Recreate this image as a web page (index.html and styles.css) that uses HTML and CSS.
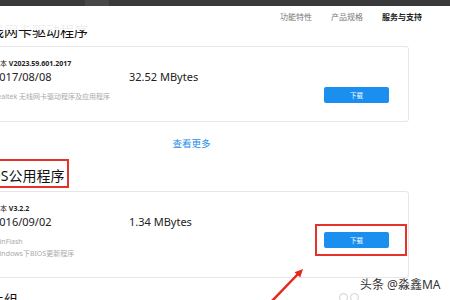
FILE: index.html
```html
<!DOCTYPE html>
<html lang="zh-CN">
<head>
  <meta charset="UTF-8">
  <meta name="viewport" content="width=device-width, initial-scale=1.0">
  <title>服务与支持</title>
  <link rel="stylesheet" href="styles.css">
</head>
<body>
  <div class="topbar"><span class="tab"></span></div>
  <header class="header">
    <nav class="nav">
      <a href="#">功能特性</a>
      <a href="#">产品规格</a>
      <a href="#" class="active">服务与支持</a>
    </nav>
  </header>

  <main class="content">
    <section class="section">
      <div class="title-row">
        <h2 class="title">无线网卡驱动程序</h2>
      </div>
      <div class="card">
        <div class="version">版本 <b>V2023.59.601.2017</b></div>
        <div class="meta"><span class="date">2017/08/08</span><span>32.52 MBytes</span></div>
        <div class="detail">
          <div class="desc">
            <p>Realtek 无线网卡驱动程序及应用程序</p>
          </div>
          <button class="btn">下载</button>
        </div>
      </div>
      <a href="#" class="more">查看更多</a>
    </section>

    <section class="section">
      <div class="title-row">
        <h2 class="title marked">BIOS公用程序</h2>
      </div>
      <div class="card">
        <div class="version">版本 <b>V3.2.2</b></div>
        <div class="meta"><span class="date">2016/09/02</span><span>1.34 MBytes</span></div>
        <div class="detail">
          <div class="desc">
            <p>WinFlash</p>
            <p>Windows下BIOS更新程序</p>
          </div>
          <span class="marker"><button class="btn">下载</button></span>
        </div>
      </div>
    </section>

    <section class="section">
      <div class="title-row">
        <h2 class="title">芯片组</h2>
        <div class="icons"><i></i><i></i></div>
      </div>
    </section>
  </main>

  <svg class="arrow" width="45" height="38" viewBox="0 0 45 38">
    <line x1="6" y1="40" x2="33" y2="12" stroke="#e8271c" stroke-width="2.5"/>
    <polygon points="38,7 35.2,15.6 29.6,10.2" fill="#e8271c"/>
  </svg>
  <div class="watermark">头条 @淼鑫MA</div>
</body>
</html>
```

FILE: styles.css
```css
* {
  margin: 0;
  padding: 0;
  box-sizing: border-box;
}

html, body {
  height: 300px;
  overflow: hidden;
}

body {
  position: relative;
  font-family: "Noto Sans", "Noto Sans CJK SC", sans-serif;
  color: #222;
  background-color: #fff;
}

.topbar {
  display: flex;
  height: 6px;
  background-color: #3a3a3a;
}
.topbar .tab {
  width: 24px;
  margin-left: 85px;
  background-color: #474747;
}

.header {
  position: relative;
  z-index: 1;
  display: flex;
  justify-content: flex-end;
  height: 24px;
  padding: 5px 28px 0 0;
  background-color: rgba(255,255,255,0.93);
}

.nav {
  display: flex;
  gap: 19px;
  font-size: 8px;
  line-height: 11px;
}
.nav a {
  color: #777;
  text-decoration: none;
}
.nav a.active {
  color: #222;
  font-weight: bold;
}

.content {
  width: 435px;
  margin-top: -16px;
  margin-left: -26px;
}

.section {
  margin-bottom: 5px;
}

.title-row {
  display: flex;
  align-items: center;
  margin-bottom: 3px;
}

.title {
  font-size: 14px;
  font-weight: normal;
  line-height: 17px;
  color: #111;
  padding: 6px 3px 2px 0;
  border: 2px solid transparent;
}
.title.marked {
  border-color: #e5322a;
}

.icons {
  display: flex;
  gap: 2px;
  margin-left: auto;
  margin-right: 50px;
}
.icons i {
  width: 9px;
  height: 9px;
  border: 1px solid #d0d0d0;
  border-radius: 50%;
}

.card {
  border: 1px solid #e6e6e6;
  border-radius: 3px;
  padding: 12px 19px 18px 18px;
}

.version {
  font-size: 7px;
  line-height: 10px;
}

.meta {
  display: flex;
  margin-top: 1px;
  font-size: 11px;
  line-height: 14px;
}
.meta .date {
  width: 136px;
}

.detail {
  display: flex;
  justify-content: space-between;
  align-items: flex-start;
  margin-top: 3px;
}

.desc {
  margin-top: 4px;
  font-size: 7px;
  line-height: 11.5px;
  color: #aaa;
}

.btn {
  width: 65px;
  height: 16px;
  border: none;
  border-radius: 2px;
  background-color: #1a8ff0;
  color: #fff;
  font-family: inherit;
  font-size: 6.5px;
}

.marker {
  display: flex;
  margin: -8px -18px 0 0;
  padding: 6px 16px 6px 7px;
  border: 2px solid #e5322a;
}

.more {
  display: block;
  margin: 15px 0 8px;
  text-align: center;
  font-size: 9.5px;
  line-height: 14px;
  color: #1e8ee6;
  text-decoration: none;
}

.arrow {
  position: absolute;
  left: 265px;
  top: 262px;
}

.watermark {
  position: absolute;
  left: 360px;
  top: 277px;
  font-size: 12px;
  line-height: 16px;
  color: #333;
  text-shadow: 0 0 2px #fff;
}
```
